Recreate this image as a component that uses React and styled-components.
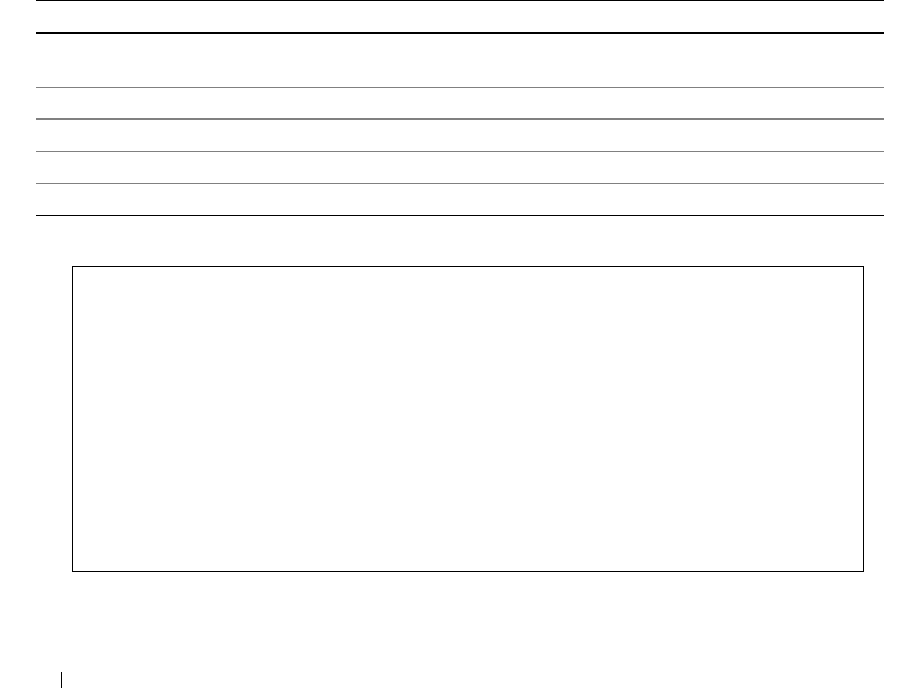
import React from "react";
import styled, { createGlobalStyle } from "styled-components";

const Global = createGlobalStyle`
  html, body { margin: 0; padding: 0; background: #fff; }
  body { font-family: "Liberation Sans", Arial, sans-serif; }
`;

const Page = styled.div`
  width: 900px;
  height: 688px;
  box-sizing: border-box;
  padding-left: 36px;
  display: flex;
  flex-direction: column;
  overflow: hidden;
`;

const Table = styled.div`
  width: 848px;
  display: flex;
  flex-direction: column;
  border-top: 1px solid #000;
`;

const Row = styled.div`
  height: ${(p) => p.$h}px;
  border-bottom: ${(p) => p.$bw}px solid ${(p) => p.$bc};
`;

const Figure = styled.div`
  margin-top: 50px;
  margin-left: 36px;
  width: 792px;
  height: 306px;
  box-sizing: border-box;
  border: 1px solid #000;
`;

const Footer = styled.div`
  margin-top: 100px;
  margin-left: 25px;
  width: 1px;
  height: 16px;
  background: #000;
`;

const rows = [
  { h: 31, bw: 2, bc: "#000" },
  { h: 53, bw: 1, bc: "#808080" },
  { h: 30, bw: 2, bc: "#808080" },
  { h: 31, bw: 1, bc: "#808080" },
  { h: 31, bw: 1, bc: "#808080" },
  { h: 31, bw: 1, bc: "#000" },
];

export default function App() {
  return (
    <>
      <Global />
      <Page>
        <Table>
          {rows.map((r, i) => (
            <Row key={i} $h={r.h} $bw={r.bw} $bc={r.bc} />
          ))}
        </Table>
        <Figure />
        <Footer />
      </Page>
    </>
  );
}
